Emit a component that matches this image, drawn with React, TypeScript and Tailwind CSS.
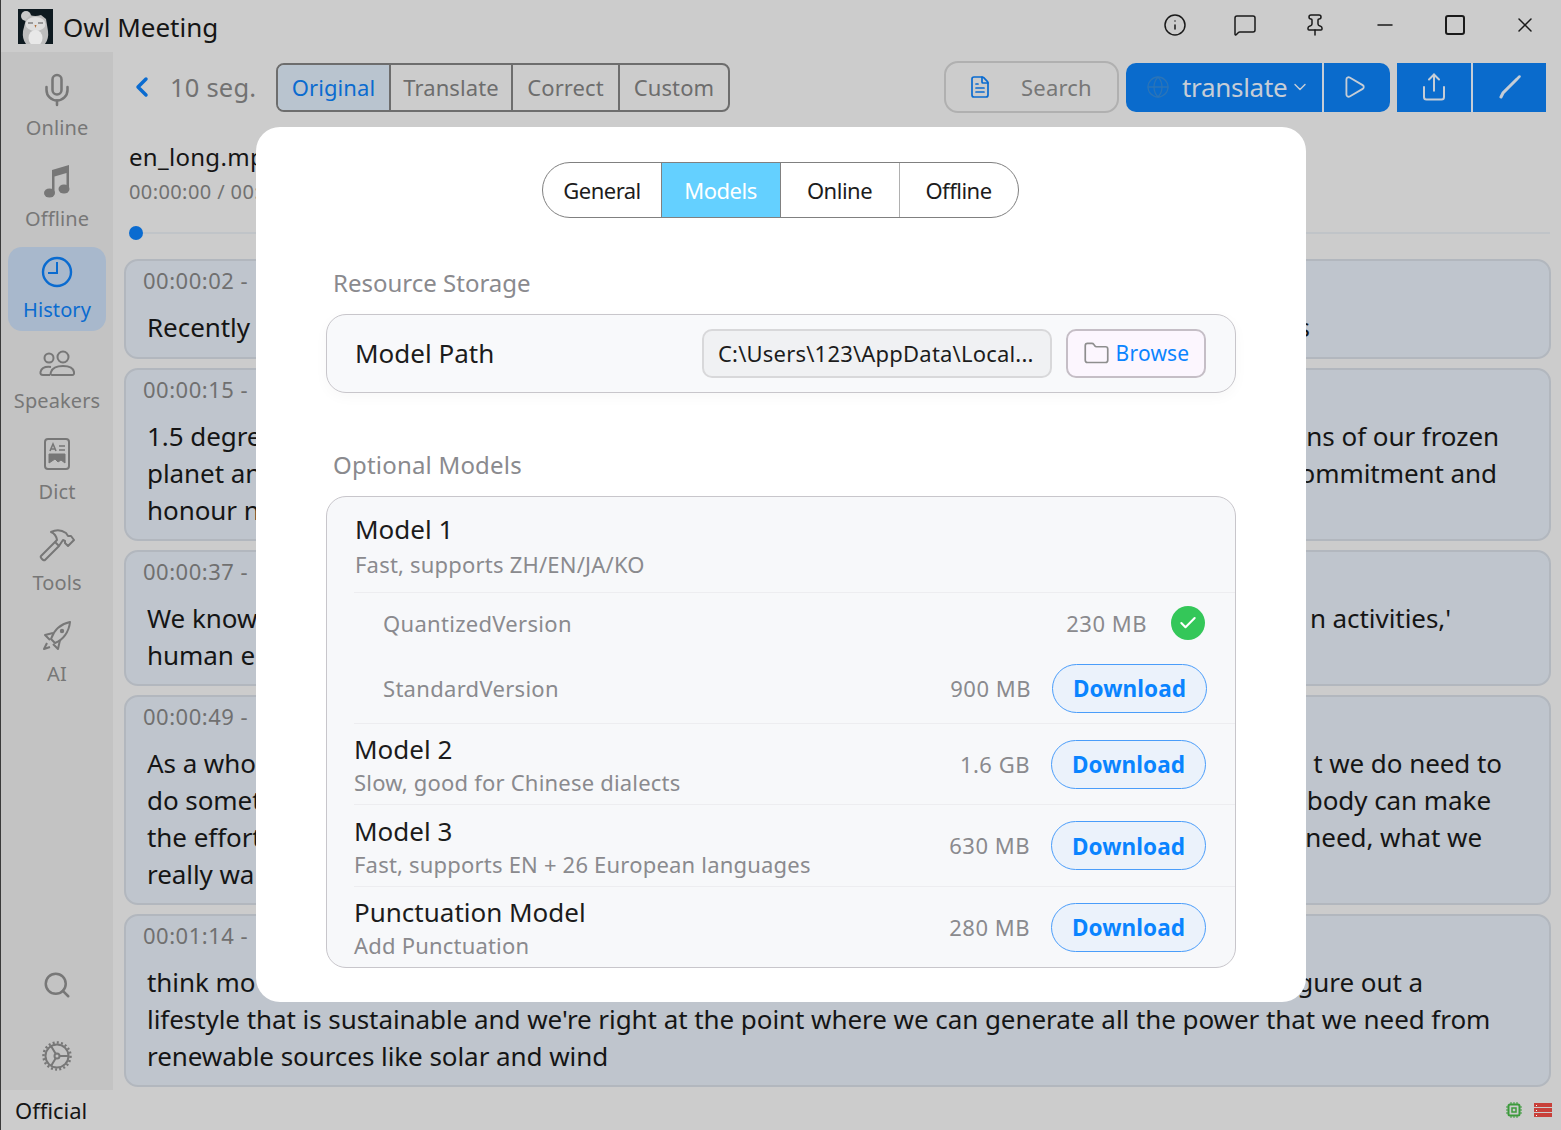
import { ChevronLeft, ChevronDown, Mic, Search, Info, MessageSquare, Pin, Minus, Square, X, FileText, Globe, Play, Share, Folder, Check } from "lucide-react";

const font = { fontFamily: '"Noto Sans", "Open Sans", sans-serif' };

function NavItem({ icon, label, active }: { icon: React.ReactNode; label: string; active?: boolean }) {
  return (
    <div className={`flex h-[84px] w-[98px] flex-col items-center rounded-[14px] pt-[5px] ${active ? "bg-[#a8b8cc] text-[#0a6bd0]" : "text-[#777]"}`}>
      <div className="flex h-[40px] items-center justify-center">{icon}</div>
      <div className="mt-[4px] text-[20px] leading-[28px] tracking-[0.1px]">{label}</div>
    </div>
  );
}

function Line({ left, right, inset = 0 }: { left: string; right?: string; inset?: number }) {
  return (
    <div className="flex h-[37px] items-center justify-between whitespace-nowrap">
      <span>{left}</span>
      {right && <span style={{ marginRight: inset }}>{right}</span>}
    </div>
  );
}

function Segment({ time, h, children }: { time: string; h: string; children: React.ReactNode }) {
  return (
    <div className={`${h} shrink-0 overflow-hidden rounded-[14px] border-2 border-[#b2b7be] bg-[#bfc5cd] pl-[21px] pr-[20px] pt-[2px]`}>
      <div className="mb-[12px] ml-[-4px] h-[34px] text-[22px] leading-[34px] tracking-[0.5px] text-[#707070]">{time}</div>
      <div className="text-[26px] tracking-[-0.06px] text-[#151515]">{children}</div>
    </div>
  );
}

function DownloadButton() {
  return (
    <button className="flex h-[49px] w-[155px] items-center justify-center rounded-full border border-[#4a9dfa] bg-[#ebf2fb] pt-[2px] text-[22.5px] font-bold tracking-[0.1px] text-[#0a84ff]">
      Download
    </button>
  );
}

function ModelRow({ title, sub, size, h = "h-[81px]" }: { title: string; sub: string; size: string; h?: string }) {
  return (
    <div className={`flex ${h} items-center border-t border-[#ededf0] pr-[29px]`}>
      <div className="flex-1">
        <div className="text-[26px] leading-[36px] text-[#1c1c1c]">{title}</div>
        <div className="text-[22px] leading-[30px] tracking-[0.2px] text-[#8a8a8e]">{sub}</div>
      </div>
      <div className="mr-[21px] text-[22px] tracking-[0.5px] text-[#8a8a8e]">{size}</div>
      <DownloadButton />
    </div>
  );
}

function OwlLogo() {
  return (
    <svg width="35" height="35" viewBox="0 0 35 35">
      <rect width="35" height="35" fill="#0e1a20" />
      <circle cx="8" cy="7" r="5" fill="#c9c9c9" />
      <path d="M8 10 L12 6 Q17 8 23 6 L28 10 L30 22 Q31 30 27 35 L8 35 Q4 30 5 22 Z" fill="#bdbdbd" />
      <ellipse cx="17.5" cy="15" rx="10" ry="7" fill="#dedede" />
      <path d="M10 14 h5 M20 14 h5" stroke="#555" strokeWidth="1" />
      <path d="M16.5 16 h2 l-1 3 z" fill="#b0703a" />
      <ellipse cx="17.5" cy="29" rx="7" ry="8" fill="#e8e8e8" />
    </svg>
  );
}

function MusicIcon() {
  return (
    <svg width="28" height="34" viewBox="0 0 28 34" fill="currentColor">
      <path d="M9 6 L26 1 V25 H23.5 V9 L11.5 12.5 V29 H9 Z" />
      <ellipse cx="6.5" cy="29" rx="5.5" ry="4.5" />
      <ellipse cx="21" cy="25" rx="5.5" ry="4.5" />
    </svg>
  );
}

function ClockIcon() {
  return (
    <svg width="32" height="32" viewBox="0 0 32 32" fill="none" stroke="currentColor" strokeWidth="2.4">
      <circle cx="16" cy="16" r="14" />
      <path d="M16 6 V17 H7" strokeWidth="2" />
    </svg>
  );
}

function UsersIcon() {
  return (
    <svg width="36" height="26" viewBox="0 0 36 26" fill="none" stroke="currentColor" strokeWidth="2">
      <circle cx="10" cy="8" r="4.5" />
      <circle cx="24" cy="7" r="5.5" />
      <path d="M12 17 Q3 16 1.5 22 Q1 25 4 25 H11" />
      <path d="M13 25 Q11 25 12 22 Q14 16 24 16 Q34 16 35 22 Q35.5 25 33 25 Z" />
    </svg>
  );
}

function HammerIcon() {
  return (
    <svg width="36" height="34" viewBox="0 0 36 34" fill="none" stroke="currentColor" strokeWidth="2" strokeLinejoin="round">
      <path d="M2 28 L16 14 L20 18 L6 32 Q5 33 3 31 Q1 29 2 28 Z" />
      <path d="M16 14 L18 12 Q17 6 12 4 Q20 0 27 5 L29 8 L32 8 L35 12 L29 18 L26 15 L26 13 L24 12 L20 18" />
    </svg>
  );
}

function RocketIcon() {
  return (
    <svg width="32" height="32" viewBox="0 0 32 32" fill="none" stroke="currentColor" strokeWidth="2" strokeLinejoin="round">
      <path d="M29 2 C20 4 13 10 10 19 L14 23 C22 20 28 12 29 2 Z" />
      <path d="M12 13 L4 15 L9 20" />
      <path d="M19 20 L17 29 L12 24" />
      <path d="M6 23 L3 29 L9 27" />
      <circle cx="21" cy="11" r="2.2" fill="currentColor" stroke="none" />
    </svg>
  );
}

export default function App() {
  return (
    <div className="relative flex h-[1130px] w-[1561px] flex-col overflow-hidden border-l border-l-[#3a3a3a] bg-[#cccccc] text-[#151515]" style={font}>
      {/* Title bar */}
      <div className="flex h-[52px] shrink-0 items-center pl-[17px]">
        <OwlLogo />
        <div className="ml-[10px] pt-[3px] text-[26px]">Owl Meeting</div>
        <div className="ml-auto flex items-center gap-[46px] pr-[24px] pb-[3px] text-[#1a1a1a]">
          <Info size={24} strokeWidth={1.5} />
          <MessageSquare size={24} strokeWidth={1.5} />
          <Pin size={24} strokeWidth={1.5} />
          <Minus size={24} strokeWidth={1.5} />
          <Square size={24} strokeWidth={2} />
          <X size={24} strokeWidth={1.5} />
        </div>
      </div>

      <div className="flex min-h-0 flex-1">
        {/* Sidebar */}
        <div className="flex w-[112px] shrink-0 flex-col items-center bg-[#c3c3c3] pt-[13px]">
          <div className="flex flex-col gap-[7px]">
            <NavItem icon={<Mic size={36} strokeWidth={1.7} />} label="Online" />
            <NavItem icon={<MusicIcon />} label="Offline" />
            <NavItem icon={<ClockIcon />} label="History" active />
            <NavItem icon={<UsersIcon />} label="Speakers" />
            <NavItem
              icon={
                <svg width="26" height="32" viewBox="0 0 26 32" fill="none" stroke="currentColor" strokeWidth="2">
                  <rect x="1" y="1" width="24" height="30" rx="3" />
                  <path d="M6 13 l3-7 3 7 M7 11 h4 M15 8 h6 M15 12 h6" strokeWidth="1.6" />
                  <path d="M5 16 h16 v9 l-4-3-3 2-3-3-6 4 z" fill="currentColor" strokeWidth="1" />
                </svg>
              }
              label="Dict"
            />
            <NavItem icon={<HammerIcon />} label="Tools" />
            <NavItem icon={<RocketIcon />} label="AI" />
          </div>
          <div className="mt-auto flex flex-col items-center gap-[41px] pb-[19px] text-[#777]">
            <Search size={30} strokeWidth={2} />
            <svg width="30" height="30" viewBox="0 0 30 30" fill="none" stroke="currentColor" strokeWidth="2">
              <circle cx="15" cy="15" r="11.5" />
              <circle cx="15" cy="15" r="13.5" strokeWidth="2.5" strokeDasharray="2 2.2" />
              <circle cx="15" cy="15" r="2.5" />
              <path d="M17.5 15 H26 M13.7 12.8 L9 5 M13.7 17.2 L9 25" />
            </svg>
          </div>
        </div>

        {/* Main */}
        <div className="flex min-w-0 flex-1 flex-col pl-[11px] pr-[10px]">
          <div className="mt-[10px] flex h-[50px] shrink-0 items-center pr-[5px]">
            <ChevronLeft size={32} strokeWidth={2.6} className="ml-[2px] text-[#0a6bd0]" />
            <div className="ml-[12px] w-[106px] text-[25.5px] tracking-[0.2px] text-[#727272]">10 seg.</div>
            <div className="flex h-[49px] overflow-hidden rounded-[8px] border-2 border-[#6d6d6d] text-[22px] tracking-[0.1px] text-[#6d6d6d]">
              <div className="flex w-[113px] items-center justify-center border-r-2 border-[#6d6d6d] bg-[#b9c4cf] text-[#0a6bd0]">Original</div>
              <div className="flex w-[122px] items-center justify-center border-r-2 border-[#6d6d6d]">Translate</div>
              <div className="flex w-[107px] items-center justify-center border-r-2 border-[#6d6d6d]">Correct</div>
              <div className="flex w-[108px] items-center justify-center">Custom</div>
            </div>
            <div className="ml-auto flex h-[52px] w-[175px] items-center rounded-[14px] border-2 border-[#b0b0b0] pl-[22px] text-[22px] tracking-[0.2px] text-[#777]">
              <FileText size={24} strokeWidth={1.7} className="text-[#0a6bd0]" />
              <span className="ml-[29px]">Search</span>
            </div>
            <div className="ml-[7px] flex h-[49px] w-[264px] overflow-hidden rounded-[10px] bg-[#0a6bcc] text-[#c6cdd6]">
              <div className="flex w-[198px] items-center border-r-2 border-[#c6cdd6] pl-[20px]">
                <Globe size={24} strokeWidth={1.3} className="text-[#2a74b8]" />
                <span className="ml-[12px] text-[26px] tracking-[-0.3px]">translate</span>
                <ChevronDown size={20} strokeWidth={1.7} className="ml-[3px]" />
              </div>
              <div className="flex flex-1 items-center justify-center pr-[6px]">
                <Play size={26} strokeWidth={1.7} />
              </div>
            </div>
            <div className="ml-[7px] flex h-[49px] w-[149px] bg-[#0a6bcc] text-[#c6cdd6]">
              <div className="flex w-[76px] items-center justify-center border-r-2 border-[#c6cdd6]">
                <Share size={30} strokeWidth={1.6} />
              </div>
              <div className="flex flex-1 items-center justify-center">
                <svg width="24" height="24" viewBox="0 0 24 24" fill="none" stroke="currentColor" strokeLinecap="round">
                  <path d="M3 22 L5 18 L19 4" strokeWidth="3" />
                  <path d="M20 3 L21.5 1.5" strokeWidth="2.5" />
                </svg>
              </div>
            </div>
          </div>

          <div className="ml-[5px] mt-[27px] shrink-0 text-[24px] leading-[36px] tracking-[0.3px]">en_long.mp</div>
          <div className="ml-[5px] mt-[1px] shrink-0 text-[20px] leading-[32px] tracking-[0.4px] text-[#717171]">00:00:00 / 00:</div>

          <div className="relative ml-[5px] mr-[1px] mt-[18px] h-[14px] shrink-0">
            <div className="absolute left-0 right-0 top-[6px] h-[2px] bg-[#c0c4c8]" />
            <div className="absolute left-0 top-0 h-[14px] w-[14px] rounded-full bg-[#0a6bd0]" />
          </div>

          <div className="mt-[19px] flex flex-col gap-[9px]">
            <Segment time="00:00:02 -" h="h-[100px]">
              <Line left="Recently" right="s" inset={219} />
            </Segment>
            <Segment time="00:00:15 -" h="h-[173px]">
              <Line left="1.5 degre" right="ns of our frozen" inset={30} />
              <Line left="planet an" right="ommitment and" inset={32} />
              <Line left="honour n" />
            </Segment>
            <Segment time="00:00:37 -" h="h-[136px]">
              <Line left="We know" right="n activities,'" inset={78} />
              <Line left="human e" />
            </Segment>
            <Segment time="00:00:49 -" h="h-[210px]">
              <Line left="As a who" right="t we do need to" inset={27} />
              <Line left="do somet" right="body can make" inset={38} />
              <Line left="the effort" right="need, what we" inset={47} />
              <Line left="really wa" />
            </Segment>
            <Segment time="00:01:14 -" h="h-[173px]">
              <Line left="think mo" right="gure out a" inset={106} />
              <Line left="lifestyle that is sustainable and we're right at the point where we can generate all the power that we need from" />
              <Line left="renewable sources like solar and wind" />
            </Segment>
          </div>
        </div>
      </div>

      {/* Status bar */}
      <div className="flex h-[40px] shrink-0 items-center pl-[14px] pr-[9px]">
        <span className="text-[22px]">Official</span>
        <div className="ml-auto flex items-center gap-[12px]">
          <svg width="16" height="16" viewBox="0 0 16 16" fill="none" stroke="#3c9a3c">
            <rect x="2.5" y="2.5" width="11" height="11" rx="1.5" strokeWidth="2" />
            <rect x="6" y="6" width="4" height="4" strokeWidth="1.5" />
            <path d="M5 0v2M8 0v2M11 0v2M5 14v2M8 14v2M11 14v2M0 5h2M0 8h2M0 11h2M14 5h2M14 8h2M14 11h2" />
          </svg>
          <div className="flex w-[18px] flex-col gap-[1px]">
            <div className="flex h-[4px] items-center bg-[#c8403a] pl-[2px]"><div className="h-[1px] w-[1px] bg-white" /></div>
            <div className="flex h-[4px] items-center bg-[#c8403a] pl-[2px]"><div className="h-[1px] w-[1px] bg-white" /></div>
            <div className="flex h-[4px] items-center bg-[#c8403a] pl-[2px]"><div className="h-[1px] w-[1px] bg-white" /></div>
          </div>
        </div>
      </div>

      {/* Settings dialog */}
      <div className="absolute inset-0 flex items-center justify-center pb-[1px]">
        <div className="h-[875px] w-[1050px] rounded-[24px] bg-white px-[70px] pt-[35px]">
          <div className="flex justify-center pr-[2px]">
            <div className="flex h-[56px] overflow-hidden rounded-full border border-[#808080] text-[22px] tracking-[-0.5px] text-[#1c1c1c]">
              <div className="flex w-[118px] items-center justify-center pl-[1px]">General</div>
              <div className="flex w-[120px] items-center justify-center border-x border-[#808080] bg-[#64d0ff] text-white">Models</div>
              <div className="flex w-[119px] items-center justify-center border-r border-[#b0b0b0]">Online</div>
              <div className="flex w-[118px] items-center justify-center">Offline</div>
            </div>
          </div>

          <div className="mt-[48px] pl-[7px] text-[24px] leading-[34px] text-[#8a8a8e]">Resource Storage</div>
          <div className="mt-[14px] flex h-[79px] items-center rounded-[20px] border border-[#c8c6cb] bg-[#f8f9fb] pl-[28px] pr-[29px] shadow-[0_4px_14px_rgba(0,0,0,0.03)]">
            <div className="text-[26px] text-[#1c1c1c]">Model Path</div>
            <div className="ml-auto flex h-[49px] w-[350px] items-center rounded-[10px] border-2 border-[#d8d8da] bg-[#f0f1f3] pb-[1px] pl-[14px] text-[22px] tracking-[0.2px] text-[#1c1c1c]">
              C:\Users\123\AppData\Local...
            </div>
            <div className="ml-[14px] flex h-[49px] w-[140px] items-center justify-center rounded-[10px] border-2 border-[#c5bec6] bg-[#fcf6fe] text-[21px] tracking-[0.2px] text-[#0a84ff]">
              <Folder size={27} strokeWidth={1.5} className="mr-[6px] text-[#8e8e8e]" />
              Browse
            </div>
          </div>

          <div className="mt-[55px] pl-[7px] text-[24px] leading-[34px] tracking-[0.2px] text-[#8a8a8e]">Optional Models</div>
          <div className="mt-[14px] h-[472px] rounded-[20px] border border-[#c8c6cb] bg-[#f7f8fa] pl-[27px]">
            <div className="flex h-[95px] flex-col justify-center pl-[1px] pt-[2px]">
              <div className="text-[26px] leading-[36px] text-[#1c1c1c]">Model 1</div>
              <div className="text-[22px] leading-[34px] tracking-[0.2px] text-[#8a8a8e]">Fast, supports ZH/EN/JA/KO</div>
            </div>
            <div className="border-t border-[#ededf0] pl-[29px] pr-[28px] text-[22px] tracking-[0.3px] text-[#8a8a8e]">
              <div className="flex h-[62px] items-center pb-[2px]">
                <span>QuantizedVersion</span>
                <span className="ml-auto mr-[24px] tracking-[0.5px]">230 MB</span>
                <span className="mr-[2px] flex h-[34px] w-[34px] items-center justify-center rounded-full bg-[#34c759]">
                  <Check size={20} strokeWidth={2.5} className="text-white" />
                </span>
              </div>
              <div className="flex h-[68px] items-center pb-[2px]">
                <span>StandardVersion</span>
                <span className="ml-auto mr-[21px] tracking-[0.5px]">900 MB</span>
                <DownloadButton />
              </div>
            </div>
            <ModelRow title="Model 2" sub="Slow, good for Chinese dialects" size="1.6 GB" />
            <ModelRow title="Model 3" sub="Fast, supports EN + 26 European languages" size="630 MB" h="h-[82px]" />
            <ModelRow title="Punctuation Model" sub="Add Punctuation" size="280 MB" />
          </div>
        </div>
      </div>
    </div>
  );
}
